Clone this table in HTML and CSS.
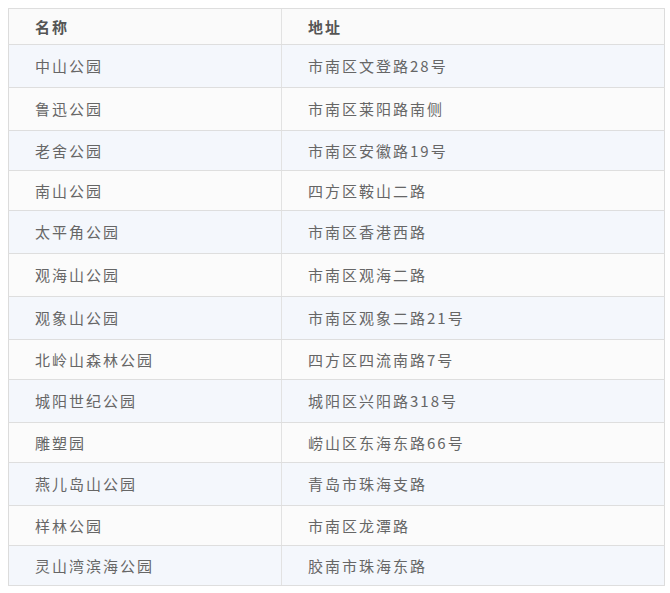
FILE: index.html
```html
<!DOCTYPE html>
<html lang="zh-CN">
<head>
<meta charset="utf-8">
<title>公园列表</title>
<link rel="stylesheet" href="styles.css">
</head>
<body>
<table class="parks">
  <thead>
    <tr class="head"><th class="c-name">名称</th><th class="c-addr">地址</th></tr>
  </thead>
  <tbody>
    <tr class="tall"><td>中山公园</td><td>市南区文登路28号</td></tr>
    <tr class="tall"><td>鲁迅公园</td><td>市南区莱阳路南侧</td></tr>
    <tr class="short"><td>老舍公园</td><td>市南区安徽路19号</td></tr>
    <tr class="short"><td>南山公园</td><td>四方区鞍山二路</td></tr>
    <tr class="tall"><td>太平角公园</td><td>市南区香港西路</td></tr>
    <tr class="tall"><td>观海山公园</td><td>市南区观海二路</td></tr>
    <tr class="tall"><td>观象山公园</td><td>市南区观象二路21号</td></tr>
    <tr class="short"><td>北岭山森林公园</td><td>四方区四流南路7号</td></tr>
    <tr class="tall"><td>城阳世纪公园</td><td>城阳区兴阳路318号</td></tr>
    <tr class="short"><td>雕塑园</td><td>崂山区东海东路66号</td></tr>
    <tr class="tall"><td>燕儿岛山公园</td><td>青岛市珠海支路</td></tr>
    <tr class="short"><td>样林公园</td><td>市南区龙潭路</td></tr>
    <tr class="short"><td>灵山湾滨海公园</td><td>胶南市珠海东路</td></tr>
  </tbody>
</table>
</body>
</html>
```

FILE: styles.css
```css
html, body {
  margin: 0;
  padding: 0;
  background: #ffffff;
}
body {
  padding: 8px;
  font-family: "Noto Sans CJK SC", "Liberation Sans", sans-serif;
}
.parks {
  width: 657px;
  border-collapse: collapse;
  border: 1px solid #dcdcdc;
  font-size: 15px;
  line-height: 18px;
  color: #666666;
}
.parks th,
.parks td {
  padding: 0 0 0 26px;
  text-align: left;
  vertical-align: middle;
  letter-spacing: 2px;
  border-top: 1px solid #dedede;
  border-bottom: 1px solid #dedede;
}
.parks th + th,
.parks td + td {
  border-left: 1px solid #e2e2e2;
}
.parks .c-name {
  width: 246px;
}
.head {
  height: 36px;
  background: #fafafa;
}
.head th {
  font-weight: bold;
  color: #555555;
}
.tall {
  height: 43px;
}
.short {
  height: 40px;
}
tbody tr:nth-child(odd) {
  background: #f4f7fc;
}
tbody tr:nth-child(even) {
  background: #fbfbfb;
}
```
